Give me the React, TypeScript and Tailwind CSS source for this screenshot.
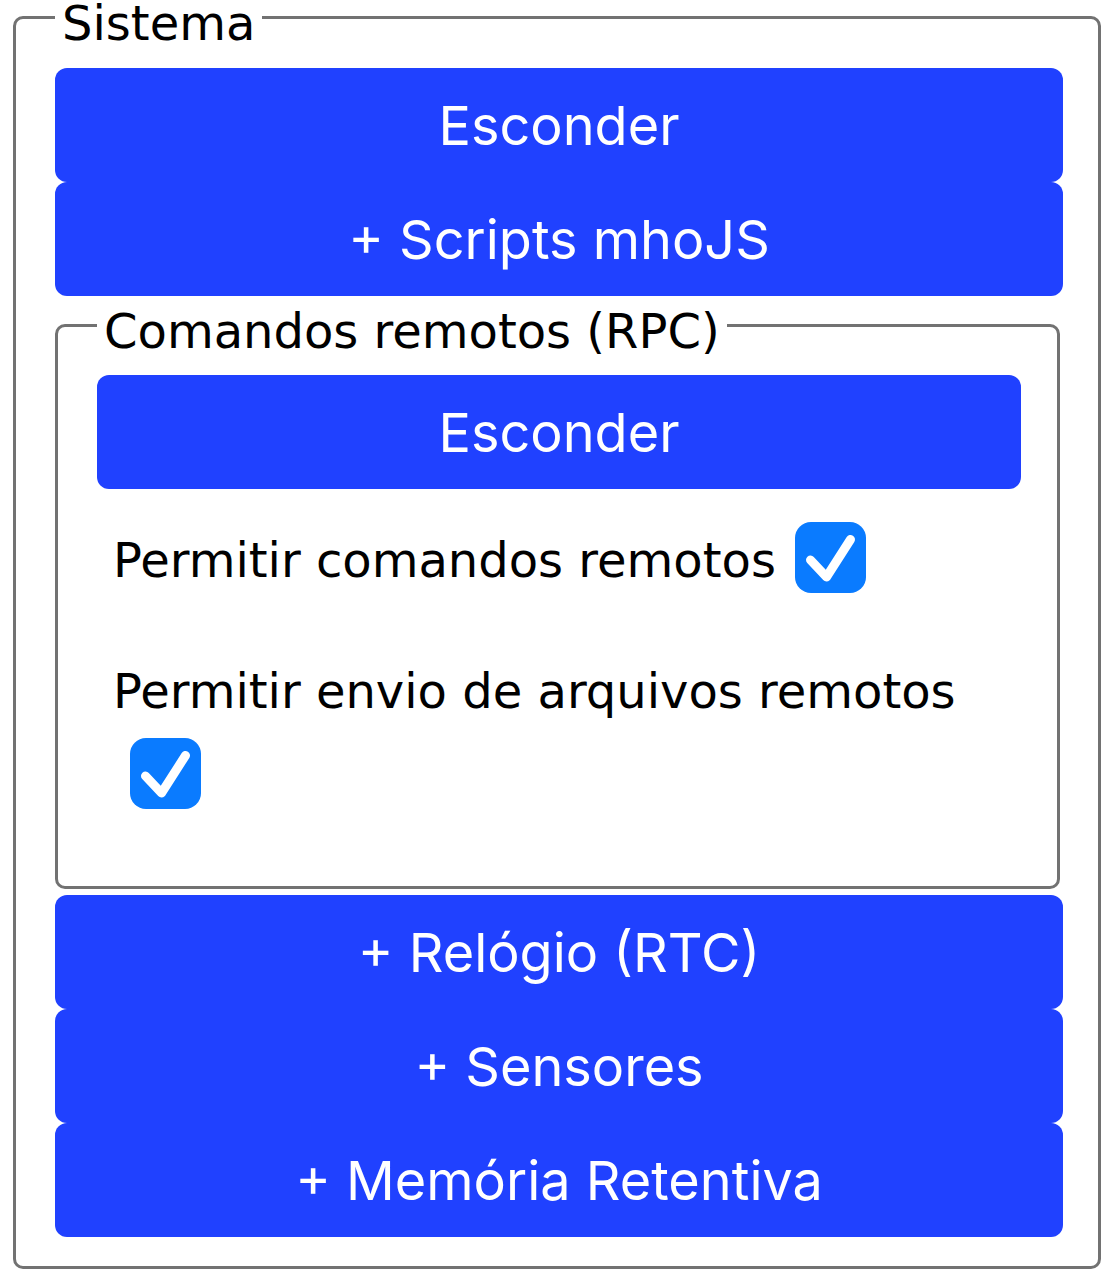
import React from "react";

const Btn = ({ children, className = "" }: { children: React.ReactNode; className?: string }) => (
  <button
    className={`flex h-[114px] w-full items-center justify-center rounded-[12px] bg-[#2041ff] text-[54px] text-white ${className}`}
    style={{ fontFamily: "Inter, 'Noto Sans', sans-serif" }}
  >
    {children}
  </button>
);

const Check = ({ className = "" }: { className?: string }) => (
  <span className={`flex h-[71px] w-[71px] shrink-0 items-center justify-center rounded-[16px] bg-[#0a7bff] ${className}`}>
    <svg width="71" height="71" viewBox="0 0 71 71" fill="none">
      <path d="M15.5 38 L31.5 55 L55.5 17.5" stroke="white" strokeWidth="9" strokeLinecap="round" strokeLinejoin="round" />
    </svg>
  </span>
);

export default function App() {
  return (
    <div className="min-h-[1283px] w-[1119px] bg-white" style={{ fontFamily: "'DejaVu Sans', Verdana, sans-serif" }}>
      <fieldset className="-mt-[5px] ml-[13px] w-[1088px] rounded-[10px] border-[3px] border-[#727272] pb-[29px] pl-[39px] pr-[35px] pt-[28px]">
        <legend className="px-[7px] pt-[11px] text-[48px] leading-[34px] text-black">Sistema</legend>
        <Btn>Esconder</Btn>
        <Btn>+ Scripts mhoJS</Btn>

        <fieldset className="mb-[6px] mr-[3px] mt-[7px] rounded-[10px] border-[3px] border-[#727272] pb-[77px] pl-[39px] pr-[36px] pt-[27px]">
          <legend className="px-[7px] pt-[11px] text-[48px] leading-[34px] text-black">Comandos remotos (RPC)</legend>
          <Btn>Esconder</Btn>
          <div className="mt-[33px] flex items-center pl-[16px] text-[48px] text-black">
            <span className="pt-[4px] leading-[56px]">Permitir comandos remotos</span>
            <Check className="ml-[19px]" />
          </div>
          <div className="mt-[70px] flex flex-col items-start pl-[16px] text-[48px] text-black">
            <div className="leading-[56px]">Permitir envio de arquivos remotos</div>
            <Check className="ml-[17px] mt-[19px]" />
          </div>
        </fieldset>

        <Btn>+ Relógio (RTC)</Btn>
        <Btn>+ Sensores</Btn>
        <Btn>+ Memória Retentiva</Btn>
      </fieldset>
    </div>
  );
}
